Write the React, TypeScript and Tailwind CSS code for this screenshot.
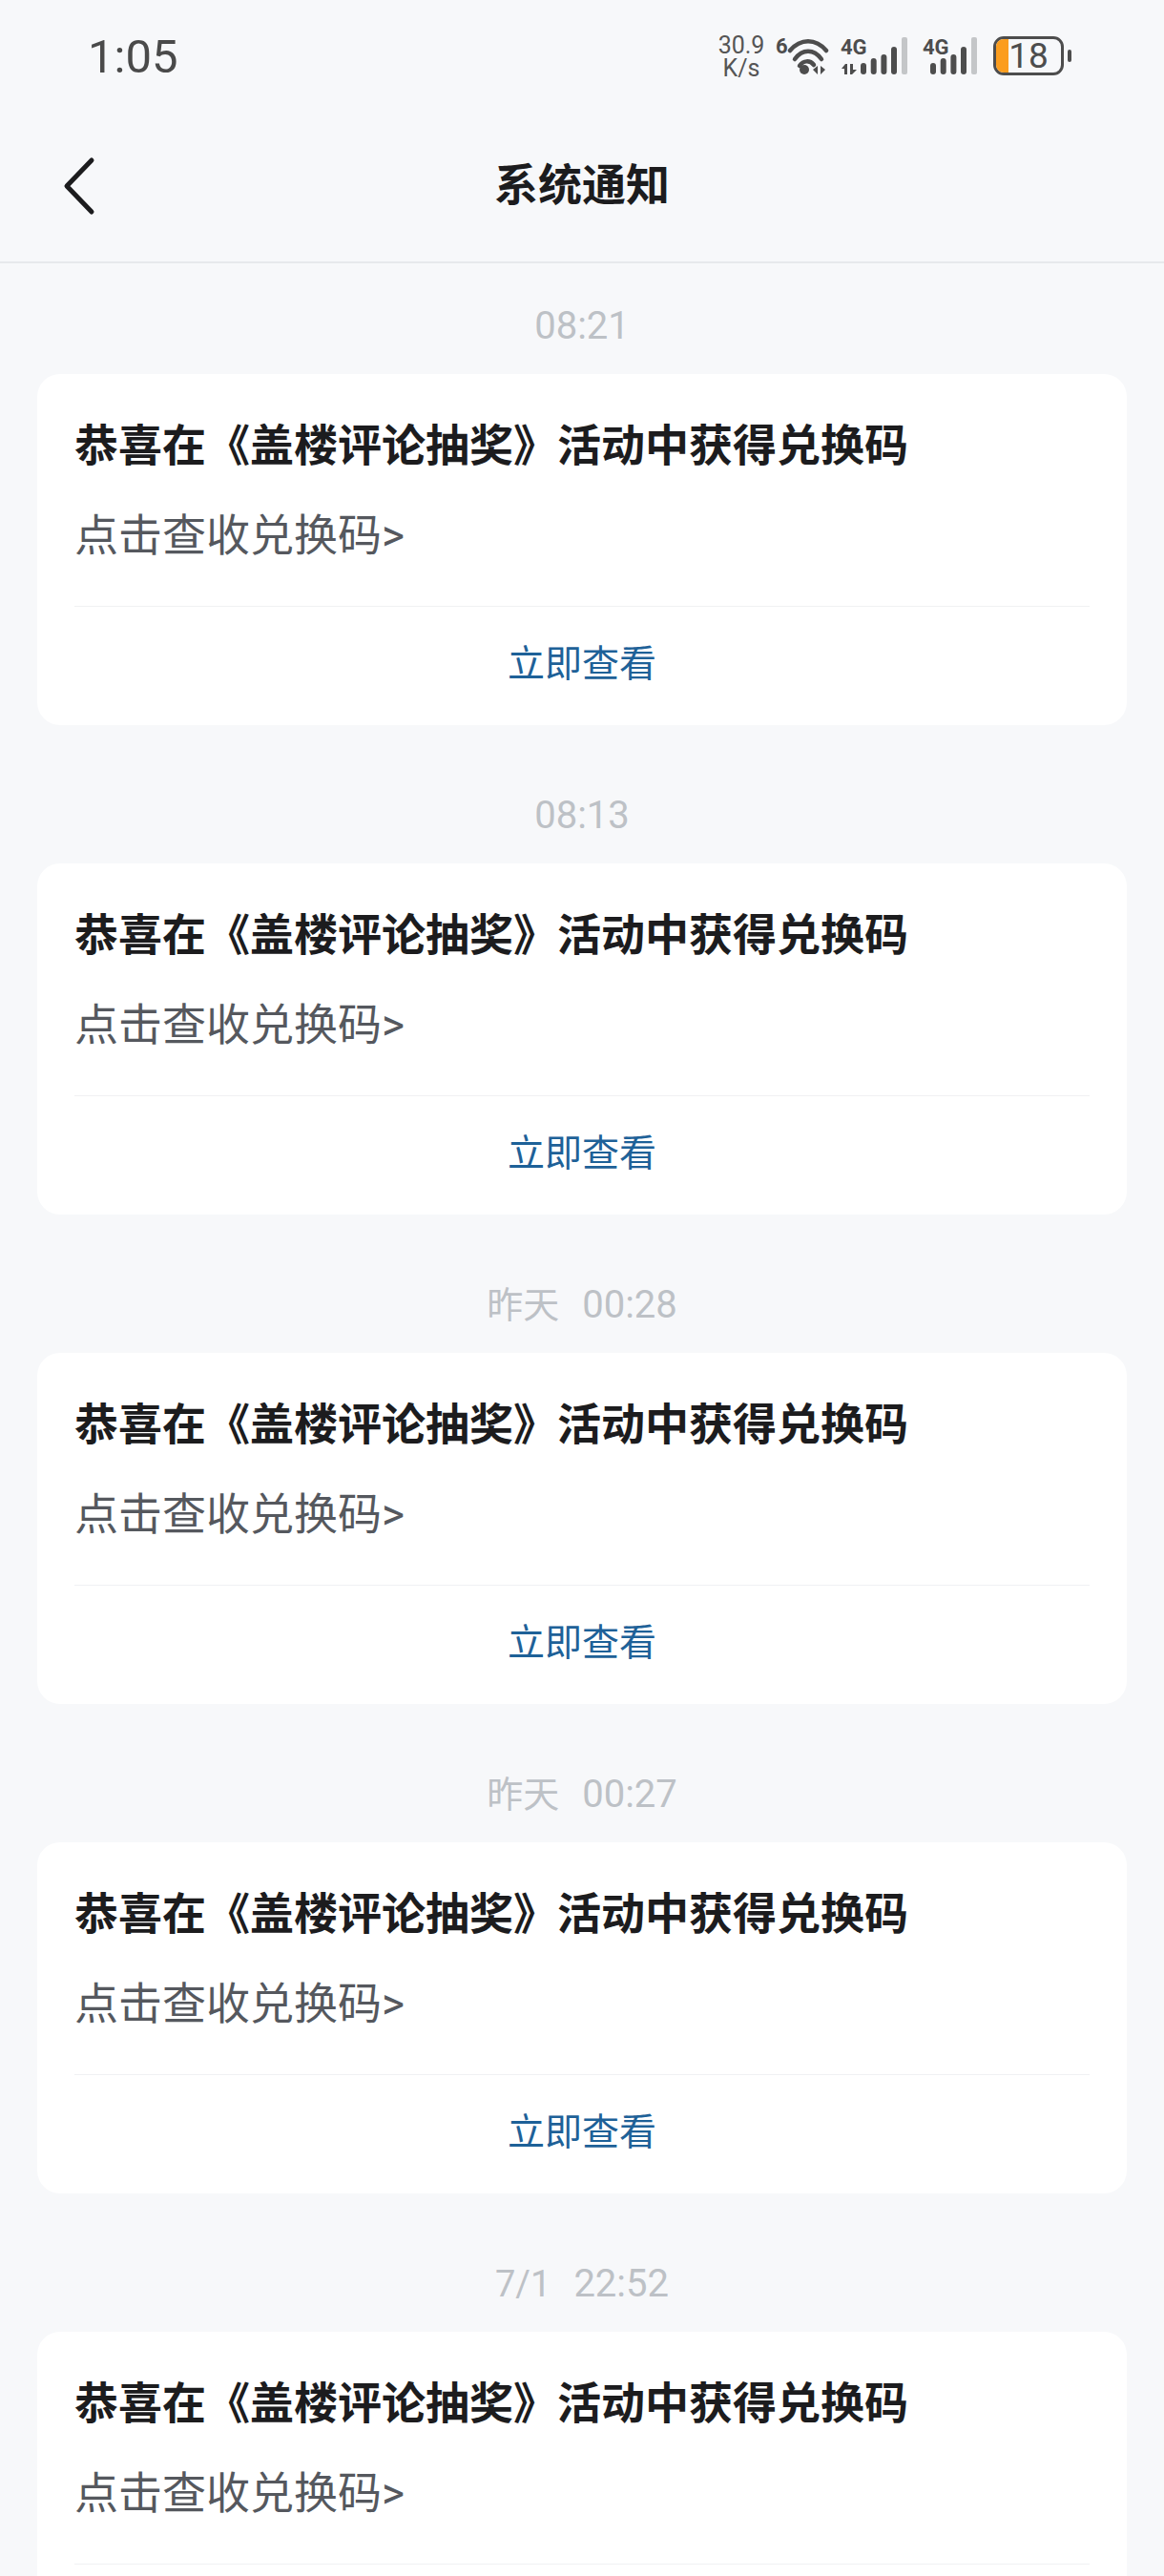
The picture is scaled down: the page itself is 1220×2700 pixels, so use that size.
const cjk = "font-['Roboto','Noto_Sans_CJK_SC',sans-serif]";

const notices = [
  { date: '', time: '08:21' },
  { date: '', time: '08:13' },
  { date: '昨天', time: '00:28' },
  { date: '昨天', time: '00:27' },
  { date: '7/1', time: '22:52' },
];

function SignalBars({ x }: { x: number }) {
  return (
    <g transform={`translate(${x} 0)`}>
      <rect x="0" y="27" width="6" height="12" rx="3" fill="#4d4d4d" />
      <rect x="10.7" y="22" width="6" height="17" rx="3" fill="#4d4d4d" />
      <rect x="21.4" y="18" width="6" height="21" rx="3" fill="#4d4d4d" />
      <rect x="32" y="10" width="6" height="29" rx="3" fill="#4d4d4d" />
      <rect x="43" y="0" width="6" height="39" rx="2" fill="#c4c6c8" />
    </g>
  );
}

function StatusIcons() {
  return (
    <div className="flex items-center">
      <div className="mt-[2px] flex w-[52px] flex-col items-center text-[25px] leading-[24px] text-[#555555]">
        <span>30.9</span>
        <span>K/s</span>
      </div>
      <span className="mb-[20px] ml-[10px] w-[12px] text-[22px] leading-[20px] font-bold text-[#4d4d4d]">6</span>
      <svg width="44" height="40" viewBox="0 0 44 40">
        <path d="M3 14 C14 1 30 1 41 14" fill="none" stroke="#4d4d4d" strokeWidth="4.5" strokeLinecap="round" />
        <path d="M8 23 C16 12 28 12 36 23" fill="none" stroke="#4d4d4d" strokeWidth="4.5" strokeLinecap="round" />
        <path d="M13 30 C17 24 24 24 28 29" fill="none" stroke="#4d4d4d" strokeWidth="4.5" strokeLinecap="round" />
        <circle cx="18" cy="34" r="5" fill="#4d4d4d" />
        <path d="M27 34 L32 30 V39 Z M35 30 L40 34 L35 39 Z" fill="#4d4d4d" />
      </svg>
      <div className="relative ml-[12px] h-[39px] w-[70px]">
        <span className="absolute top-[1px] left-0 text-[22px] leading-[20px] font-bold text-[#4d4d4d]">4G</span>
        <svg width="70" height="39" viewBox="0 0 70 39" className="absolute top-0 left-0">
          <path d="M1 33 L5 28 H7 V39 H4 V33 Z M10 28 H13 V34 H17 L12 39 H10 Z" fill="#4d4d4d" />
          <SignalBars x={21} />
        </svg>
      </div>
      <div className="relative ml-[16px] h-[39px] w-[57px]">
        <span className="absolute top-[1px] left-0 text-[22px] leading-[20px] font-bold text-[#4d4d4d]">4G</span>
        <svg width="57" height="39" viewBox="0 0 57 39" className="absolute top-0 left-0">
          <SignalBars x={8} />
        </svg>
      </div>
      <div className="relative ml-[17px] h-[41px] w-[74px] rounded-[11px] border-[3px] border-[#4d4d4d]">
        <div className="h-full w-[13px] rounded-l-[8px] bg-[#fb9d1e]" />
        <span className="absolute top-0 left-[13px] w-[42px] text-center text-[37px] leading-[35px] text-[#4d4d4d]">18</span>
      </div>
      <div className="ml-[4px] h-[13px] w-[4px] rounded-full bg-[#4d4d4d]" />
    </div>
  );
}

function NoticeCard({ showAction }: { showAction: boolean }) {
  return (
    <div className="mx-[39px] h-[368px] rounded-[24px] bg-white px-[39px] pt-[45px]">
      <h2 className="h-[60px] text-[46px] leading-[60px] font-bold whitespace-nowrap text-[#1c1c1e]">
        恭喜在《盖楼评论抽奖》活动中获得兑换码
      </h2>
      <p className="mt-[34px] h-[60px] text-[46px] leading-[60px] text-[#55585e]">点击查收兑换码&gt;</p>
      <div className="mt-[44px] h-[1px] bg-[#f0f1f3]" />
      {showAction && (
        <div className="flex h-[120px] items-center justify-center text-[39px] text-[#1e6198]">立即查看</div>
      )}
    </div>
  );
}

export default function App() {
  return (
    <div className={`h-[2700px] overflow-hidden bg-[#f7f8fa] ${cjk}`}>
      {/* status bar */}
      <div className="flex h-[115px] items-center justify-between pt-[2px] pr-[97px] pl-[92px]">
        <span className="mt-[2px] text-[49px] text-[#4a4a4a]">1:05</span>
        <StatusIcons />
      </div>

      {/* nav */}
      <div className="relative flex h-[161px] items-center justify-center border-b-2 border-[#e7e9ec] pb-[2px]">
        <svg width="36" height="62" viewBox="0 0 36 62" className="absolute top-[49px] left-[65px]">
          <path d="M31 4 L5 31 L31 58" fill="none" stroke="#1c1c1e" strokeWidth="5" strokeLinecap="round" strokeLinejoin="round" />
        </svg>
        <h1 className="text-[46px] leading-[60px] font-bold text-[#1c1c1e]">系统通知</h1>
      </div>

      <div className="flex flex-col gap-[70px] pt-[41px]">
        {notices.map((n, i) => (
          <div key={i}>
            <div className="mb-[25px] flex h-[50px] items-center justify-center gap-[24px] text-[40px] text-[#bdc1c6]">
              {n.date && <span className="text-[38px]">{n.date}</span>}
              <span>{n.time}</span>
            </div>
            <NoticeCard showAction={i < notices.length - 1} />
          </div>
        ))}
      </div>
    </div>
  );
}
